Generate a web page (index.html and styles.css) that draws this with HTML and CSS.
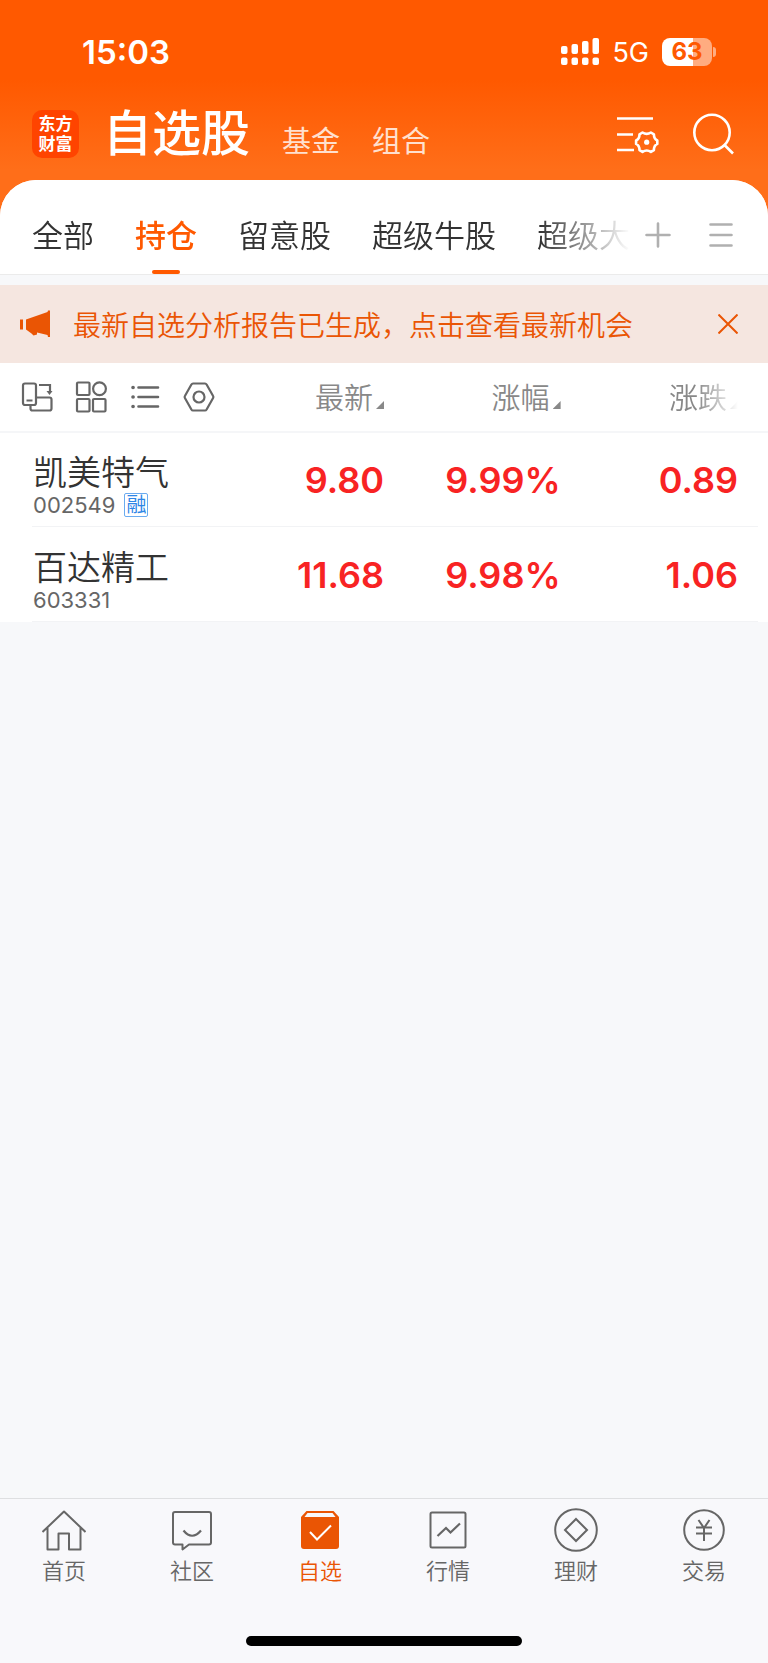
FILE: index.html
```html
<!DOCTYPE html>
<html lang="zh-CN">
<head>
    <meta charset="UTF-8">
    <meta name="viewport" content="width=device-width, initial-scale=1.0">
    <title>自选股</title>
    <link rel="stylesheet" href="styles.css">
</head>
<body>
    <header class="header">
        <!-- Status bar -->
        <div class="status-bar">
            <span class="time">15:03</span>
            <div class="status-right">
                <svg class="signal" width="38" height="28" viewBox="0 0 38 28" fill="#fff">
                    <rect x="0" y="8" width="6.500" height="8" rx="2"/>
                    <rect x="10.500" y="6" width="6.500" height="10" rx="2"/>
                    <rect x="21" y="3" width="6.500" height="13" rx="2"/>
                    <rect x="31.500" y="0" width="6.500" height="16" rx="2"/>
                    <rect x="0" y="19.500" width="6.500" height="7.500" rx="2"/>
                    <rect x="10.500" y="19.500" width="6.500" height="7.500" rx="2"/>
                    <rect x="21" y="19.500" width="6.500" height="7.500" rx="2"/>
                    <rect x="31.500" y="19.500" width="6.500" height="7.500" rx="2"/>
                </svg>
                <span class="network">5G</span>
                <span class="battery">63</span>
            </div>
        </div>

        <!-- Title bar -->
        <div class="title-bar">
            <div class="logo">东方<br>财富</div>
            <nav class="title-nav">
                <h1>自选股</h1>
                <a href="#">基金</a>
                <a href="#">组合</a>
            </nav>
            <button type="button" class="icon-btn" aria-label="设置">
                <svg width="44" height="42" viewBox="0 0 44 42" fill="none" stroke="#fff" stroke-width="2.600">
                    <path d="M0 5.500h36M0 21.500h16M0 37h17"/>
                    <path stroke-linejoin="round" d="M25.500 19.500q4.200 2.800 8.400 0l3 1.800q0 4.600 3.400 6.200v3.400q-3.400 1.600-3.400 6.200l-3 1.800q-4.200-2.800-8.400 0l-3-1.800q0-4.600-3.400-6.200v-3.400q3.400-1.600 3.400-6.200z"/>
                    <circle cx="29.700" cy="29.200" r="2.600" fill="#fff" stroke="none"/>
                </svg>
            </button>
            <button type="button" class="icon-btn" aria-label="搜索">
                <svg width="42" height="42" viewBox="0 0 42 42" fill="none" stroke="#fff" stroke-width="2.600">
                    <circle cx="19" cy="19.500" r="17.700"/>
                    <path d="M31 31.500l9 9"/>
                </svg>
            </button>
        </div>
    </header>

    <main class="sheet">
        <!-- Group tabs -->
        <div class="tabs-bar">
            <nav class="tabs">
                <a href="#" class="tab">全部</a>
                <a href="#" class="tab active">持仓</a>
                <a href="#" class="tab">留意股</a>
                <a href="#" class="tab">超级牛股</a>
                <a href="#" class="tab">超级大</a>
            </nav>
            <button type="button" class="icon-btn" aria-label="添加分组">
                <svg width="26" height="26" viewBox="0 0 26 26" stroke="#b0b0b0" stroke-width="2.600" stroke-linecap="round">
                    <path d="M13 1.500v23M1.500 13h23"/>
                </svg>
            </button>
            <button type="button" class="icon-btn menu-btn" aria-label="管理分组">
                <svg width="24" height="26" viewBox="0 0 24 26" stroke="#b0b0b0" stroke-width="2.600" stroke-linecap="round">
                    <path d="M1.500 2.500h21M1.500 13h21M1.500 23.500h21"/>
                </svg>
            </button>
        </div>

        <!-- Notice -->
        <div class="notice">
            <svg width="30" height="28" viewBox="0 0 30 28" fill="#ea5504">
                <path d="M0 9.500h3v10h-3zM6 9.500L27.500 2 28 0.500H30V27H28L27.500 25 17 22.500V24.500L13.500 25.500 11.500 23.500 6 19.500z"/>
            </svg>
            <a href="#" class="notice-text">最新自选分析报告已生成，点击查看最新机会</a>
            <button type="button" class="icon-btn" aria-label="关闭">
                <svg width="20" height="20" viewBox="0 0 20 20" stroke="#ea5504" stroke-width="2">
                    <path d="M0.500 0.500l19 19M19.500 0.500l-19 19"/>
                </svg>
            </button>
        </div>

        <!-- Stock list -->
        <table class="stocks">
            <thead>
                <tr>
                    <th class="col-name">
                        <div class="tools">
                            <button type="button" class="icon-btn" aria-label="横屏">
                                <svg width="32" height="32" viewBox="0 0 32 32" fill="none" stroke="#666" stroke-width="2.200">
                                    <rect x="2" y="2.500" width="13" height="21.500" rx="2"/>
                                    <path d="M5.500 19.500h6M9.500 24.500v3q0 2 2 2h17q2 0 2-2v-9q0-2-2-2h-13"/>
                                    <path d="M18 4h11v8"/>
                                    <path d="M25.500 10h6l-3 4z" fill="#666" stroke="none"/>
                                </svg>
                            </button>
                            <button type="button" class="icon-btn" aria-label="宫格">
                                <svg width="32" height="32" viewBox="0 0 32 32" fill="none" stroke="#666" stroke-width="2.200">
                                    <rect x="2" y="1.500" width="12.500" height="12.500" rx="1"/>
                                    <circle cx="24.500" cy="7.800" r="6.400"/>
                                    <rect x="2" y="18" width="12.500" height="12.500" rx="1"/>
                                    <rect x="18" y="18" width="12.500" height="12.500" rx="1"/>
                                </svg>
                            </button>
                            <button type="button" class="icon-btn" aria-label="列表">
                                <svg width="32" height="32" viewBox="0 0 32 32" fill="none" stroke="#666" stroke-width="2.600" stroke-linecap="round">
                                    <path d="M9.500 6.500h19.500M9.500 16h19.500M9.500 25.500h19.500"/>
                                    <path d="M4 6.500h.1M4 16h.1M4 25.500h.1" stroke-width="3.600"/>
                                </svg>
                            </button>
                            <button type="button" class="icon-btn" aria-label="指标">
                                <svg width="32" height="32" viewBox="0 0 32 32" fill="none" stroke="#666" stroke-width="2.200" stroke-linejoin="round">
                                    <path d="M10 2.500h12q1 0 1.600 1l6.500 11.500q.6 1 0 2l-6.500 11.500q-.6 1-1.600 1h-12q-1 0-1.600-1l-6.500-11.500q-.6-1 0-2l6.500-11.500q.6-1 1.600-1z"/>
                                    <circle cx="16" cy="16" r="5.500"/>
                                </svg>
                            </button>
                        </div>
                    </th>
                    <th class="col-price"><span class="sort">最新</span></th>
                    <th class="col-rate"><span class="sort">涨幅</span></th>
                    <th class="col-change"><span class="sort fade">涨跌</span></th>
                </tr>
            </thead>
            <tbody>
                <tr>
                    <td>
                        <div class="name">凯美特气</div>
                        <div class="code">002549 <span class="tag">融</span></div>
                    </td>
                    <td class="num">9.80</td>
                    <td class="num">9.99%</td>
                    <td class="num">0.89</td>
                </tr>
                <tr>
                    <td>
                        <div class="name">百达精工</div>
                        <div class="code">603331</div>
                    </td>
                    <td class="num">11.68</td>
                    <td class="num">9.98%</td>
                    <td class="num">1.06</td>
                </tr>
            </tbody>
        </table>
    </main>

    <!-- Bottom navigation -->
    <footer class="footer">
        <nav class="bottom-nav">
            <a href="#" class="nav-item">
                <svg width="44" height="44" viewBox="0 0 44 44" fill="none" stroke="#666" stroke-width="2">
                    <path d="M0.500 24L22 3.500 43.500 24M5.500 20v21.500h11V25.500h10.500v16h11.500V20" stroke-linejoin="round"/>
                </svg>
                <span>首页</span>
            </a>
            <a href="#" class="nav-item">
                <svg width="44" height="44" viewBox="0 0 44 44" fill="none" stroke="#666" stroke-width="2" stroke-linejoin="round">
                    <path d="M5 4h34q2 0 2 2v28.500q0 2-2 2h-20l-6.500 5V36.500h-7.500q-2 0-2-2v-28.500q0-2 2-2z"/>
                    <path d="M13.500 22.500q8.500 10.500 17.500 0" stroke-width="2.200"/>
                </svg>
                <span>社区</span>
            </a>
            <a href="#" class="nav-item active">
                <svg width="44" height="44" viewBox="0 0 44 44" fill="none">
                    <path d="M8.500 3h27l5.500 6v29q0 3-3 3h-32q-3 0-3-3V9z" fill="#ea5504"/>
                    <path d="M9.500 5h25l3 4h-31z" fill="#f8f8fb"/>
                    <path d="M12 24l7 7.500L33 17.500" stroke="#fff" stroke-width="2"/>
                </svg>
                <span>自选</span>
            </a>
            <a href="#" class="nav-item">
                <svg width="44" height="44" viewBox="0 0 44 44" fill="none" stroke="#666" stroke-width="2">
                    <rect x="4.500" y="4.500" width="35" height="35" rx="1.500"/>
                    <path d="M11.500 28l8.500-8 4.500 4.500 9.500-9" stroke-width="2.200"/>
                </svg>
                <span>行情</span>
            </a>
            <a href="#" class="nav-item">
                <svg width="44" height="44" viewBox="0 0 44 44" fill="none" stroke="#666" stroke-width="2">
                    <circle cx="22" cy="22" r="20.800"/>
                    <path d="M22 11l11 11-11 11-11-11z"/>
                </svg>
                <span>理财</span>
            </a>
            <a href="#" class="nav-item">
                <svg width="44" height="44" viewBox="0 0 44 44" fill="none" stroke="#666" stroke-width="2">
                    <circle cx="22" cy="22" r="19.800"/>
                    <path d="M16.500 12l5.500 8 5.500-8M22 19.500v13.500M14 19.500h16M14 25.500h16"/>
                </svg>
                <span>交易</span>
            </a>
        </nav>
        <div class="home-indicator"></div>
    </footer>
</body>
</html>
```

FILE: styles.css
```css
/* General Styles */
* {
    box-sizing: border-box;
}
body {
    display: flex;
    flex-direction: column;
    min-height: 100vh;
    margin: 0;
    font-family: Inter, "Noto Sans CJK SC", sans-serif;
    color: #333;
    background-color: #f7f8fa;
}
a {
    color: inherit;
    text-decoration: none;
}
svg {
    display: block;
    flex: none;
}
.icon-btn {
    flex: none;
    padding: 0;
    border: none;
    background: none;
    cursor: pointer;
}

/* Header */
.header {
    padding-bottom: 56px;
    color: #fff;
    background: linear-gradient(#ff5900 80px, #ff6e19 170px);
}
.status-bar {
    display: flex;
    align-items: center;
    justify-content: space-between;
    height: 104px;
    padding: 0 52px 0 82px;
}
.time {
    font-size: 33px;
    font-weight: 600;
}
.status-right {
    display: flex;
    align-items: center;
    gap: 13px;
}
.network {
    font-size: 27px;
}
.battery {
    position: relative;
    width: 50px;
    height: 28px;
    margin-right: 4px;
    border-radius: 8px;
    font-size: 24px;
    font-weight: 700;
    line-height: 28px;
    text-align: center;
    color: #ff5900;
    background: linear-gradient(to right, #fff 63%, #ffac80 63%);
}
.battery::after {
    content: "";
    position: absolute;
    top: 9px;
    right: -4px;
    width: 3px;
    height: 10px;
    border-radius: 0 4px 4px 0;
    background: #ffac80;
}
.title-bar {
    display: flex;
    align-items: center;
    gap: 32px;
    height: 60px;
    padding: 0 33px 0 32px;
}
.logo {
    width: 47px;
    height: 48px;
    padding-top: 4px;
    border-radius: 10px;
    font-size: 17px;
    font-weight: 700;
    line-height: 20px;
    text-align: center;
    background: #ff4400;
}
.title-nav {
    display: flex;
    flex: 1;
    align-items: flex-end;
    gap: 32px;
    margin-left: -8px;
}
.title-nav h1 {
    margin: 0;
    font-size: 49px;
    font-weight: 500;
    line-height: 60px;
}
.title-nav a {
    font-size: 29px;
    line-height: 44px;
    color: #ffe0cf;
}

/* Sheet */
.sheet {
    flex: 1;
    margin-top: -40px;
    border-radius: 36px 36px 0 0;
    overflow: hidden;
    background: #f7f8fa;
}
.tabs-bar {
    display: flex;
    align-items: center;
    gap: 15px;
    height: 95px;
    padding: 16px 35px 0 32px;
    border-bottom: 1px solid #ebebeb;
    background: #fff;
}
.tabs {
    display: flex;
    flex: 1;
    gap: 41px;
    min-width: 0;
    height: 100%;
    overflow: hidden;
    -webkit-mask-image: linear-gradient(to right, #000 calc(100% - 90px), transparent);
    mask-image: linear-gradient(to right, #000 calc(100% - 90px), transparent);
}
.tab {
    position: relative;
    flex: none;
    height: 78px;
    font-size: 31px;
    font-weight: 350;
    line-height: 80px;
}
.tab.active {
    font-weight: 500;
    color: #ff5900;
}
.tab.active::after {
    content: "";
    position: absolute;
    left: 50%;
    bottom: 0;
    width: 28px;
    height: 4px;
    margin-left: -14px;
    border-radius: 2px;
    background: #ff5900;
}
.menu-btn {
    margin-left: 23px;
}

/* Notice */
.notice {
    display: flex;
    align-items: center;
    height: 78px;
    margin-top: 10px;
    padding: 0 30px 0 20px;
    color: #ea5504;
    background: #f5e6e0;
}
.notice-text {
    flex: 1;
    margin-left: 23px;
    font-size: 28px;
    font-weight: 350;
    white-space: nowrap;
}

/* Stock list */
.stocks {
    width: 100%;
    table-layout: fixed;
    border-collapse: collapse;
    background: #fff;
}
.stocks th {
    height: 69px;
    padding: 4px 0 0;
    border-bottom: 2px solid #f5f6f8;
    font-size: 29px;
    font-weight: 350;
    line-height: 40px;
    text-align: right;
    color: #888;
}
.stocks .col-name {
    width: 32%;
    padding-top: 0;
}
.col-price {
    width: 18%;
}
.col-rate {
    width: 23%;
}
.col-change {
    width: 27%;
}
.stocks th:last-child,
.stocks td:last-child {
    padding-right: 30px;
}
.tools {
    display: flex;
    gap: 22px;
    padding-left: 21px;
}
.sort::after {
    content: "";
    display: inline-block;
    width: 8px;
    height: 8px;
    margin-left: 3px;
    background: #888;
    clip-path: polygon(100% 0, 100% 100%, 0 100%);
}
.fade {
    -webkit-mask-image: linear-gradient(to right, #000 40%, transparent);
    mask-image: linear-gradient(to right, #000 40%, transparent);
}
.stocks tbody tr {
    background: linear-gradient(#f2f3f5, #f2f3f5) 32px 100% / calc(100% - 42px) 1px no-repeat;
}
.stocks td {
    height: 95px;
    padding: 0;
}
.stocks td:first-child {
    padding: 10px 0 0 33px;
}
.name {
    font-size: 34px;
    font-weight: 350;
    line-height: 40px;
}
.code {
    display: flex;
    align-items: center;
    gap: 9px;
    height: 24px;
    font-size: 22px;
    color: #666;
}
.tag {
    width: 24px;
    height: 24px;
    border: 1px solid #6aabf0;
    border-radius: 2px;
    font-size: 20px;
    line-height: 22px;
    text-align: center;
    color: #2e86e6;
}
.num {
    font-size: 36px;
    font-weight: 600;
    text-align: right;
    color: #f82323;
}

/* Bottom navigation */
.footer {
    border-top: 1px solid #dedfe1;
    background: #f8f8fb;
}
.bottom-nav {
    display: flex;
    padding-top: 9px;
}
.nav-item {
    display: flex;
    flex: 1;
    flex-direction: column;
    align-items: center;
    gap: 4px;
    font-size: 22px;
    font-weight: 350;
    line-height: 30px;
    color: #666;
}
.nav-item.active {
    color: #ea5504;
}
.home-indicator {
    width: 36%;
    height: 10px;
    margin: 50px auto 17px;
    border-radius: 5px;
    background: #000;
}
```
